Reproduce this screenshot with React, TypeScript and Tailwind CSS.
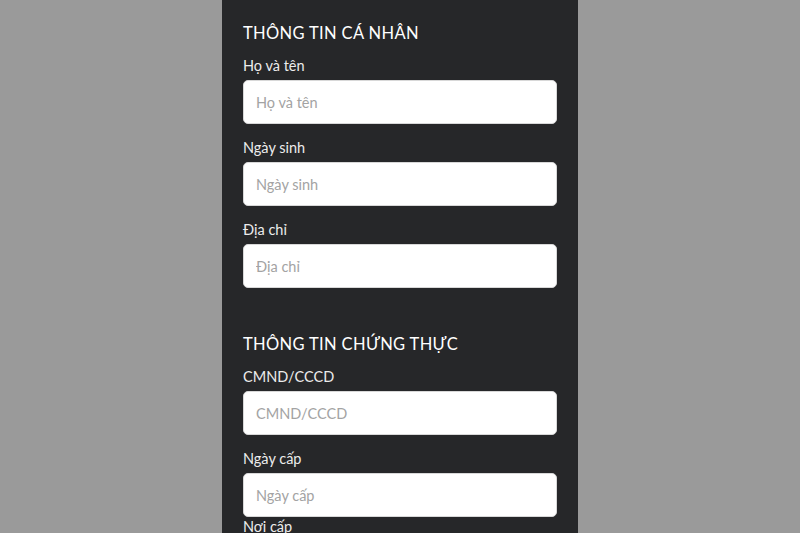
import React from 'react';

type Field = { label: string };

const personal: Field[] = [
  { label: 'Họ và tên' },
  { label: 'Ngày sinh' },
  { label: 'Địa chỉ' },
];

const identity: Field[] = [
  { label: 'CMND/CCCD' },
  { label: 'Ngày cấp' },
];

const FormField = ({ label }: Field) => (
  <div className="mb-[14px]">
    <label className="block h-5 text-[14.5px] leading-5 text-[#ececec]">{label}</label>
    <input
      type="text"
      placeholder={label}
      className="mt-1 block h-[44px] w-full rounded-[5px] border border-[#d8d8d8] bg-white px-[12px] text-[14.5px] text-[#333] outline-none placeholder:text-[#a3a3a3]"
    />
  </div>
);

const Section = ({ title, fields }: { title: string; fields: Field[] }) => (
  <section>
    <h2 className="mb-[11px] h-6 text-[16.5px] font-normal leading-6 tracking-[0.35px] text-white">{title}</h2>
    {fields.map((f) => (
      <FormField key={f.label} {...f} />
    ))}
  </section>
);

export default function App() {
  return (
    <div
      className="flex h-[533px] w-full justify-center overflow-hidden bg-[#9a9a9a]"
      style={{ fontFamily: 'Lato, "Open Sans", sans-serif' }}
    >
      <div className="w-[356px] bg-[#262729] px-[21px] pt-[21px]">
        <Section title="THÔNG TIN CÁ NHÂN" fields={personal} />
        <div className="h-[30px]" />
        <Section title="THÔNG TIN CHỨNG THỰC" fields={identity} />
        <label className="-mt-[14px] block h-5 text-[14.5px] leading-5 text-[#ececec]">Nơi cấp</label>
      </div>
    </div>
  );
}
